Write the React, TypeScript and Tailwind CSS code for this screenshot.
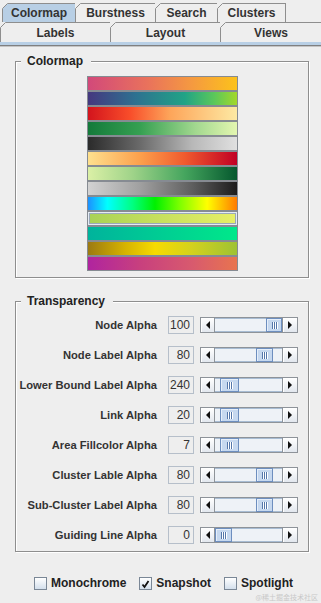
import React from "react";

const FONT = "font-['Liberation_Sans',Arial,sans-serif]";

function Tab({ label, w, selected, last }: { label: string; w: string; selected?: boolean; last?: boolean }) {
  return (
    <div
      className={`relative ${w} h-full flex items-center justify-center border-t border-l border-[#8e8e8e] ${
        last ? "border-r" : ""
      } ${selected ? "bg-[#b8cfe5]" : "bg-[#eeeeee]"} text-[12px] font-bold leading-none text-[#333333]`}
    >
      <svg className="absolute -left-px -top-px" width="6" height="6" viewBox="0 0 6 6">
        <polygon points="0,0 6,0 0,6" fill="#eeeeee" />
        <line x1="0.5" y1="5.5" x2="5.5" y2="0.5" stroke="#8e8e8e" strokeWidth="1" />
      </svg>
      {label}
    </div>
  );
}

function Group({ title, className, children }: { title: string; className: string; children: React.ReactNode }) {
  return (
    <fieldset
      className={`ml-[15px] mr-[12px] border border-[#8e8e8e] shadow-[inset_1px_1px_0_#ffffff,1px_1px_0_#ffffff] ${className}`}
    >
      <legend className="ml-[5px] pl-[6px] pr-[8px] bg-[#eeeeee] text-[12px] font-bold leading-[14px] text-[#222222]">
        {title}
      </legend>
      {children}
    </fieldset>
  );
}

const bars = [
  "bg-[linear-gradient(to_right,#d2497a,#e9725c_40%,#f59a40_70%,#fcc21b)]",
  "bg-[linear-gradient(to_right,#45387f,#2e7190_32%,#21a386_65%,#5cc85a_85%,#a3d82a)]",
  "bg-[linear-gradient(to_right,#d3141d,#f84d2a_28%,#fda55a_55%,#fde9a3)]",
  "bg-[linear-gradient(to_right,#147a3a,#36a052_35%,#a2d88f_72%,#e3f6b0)]",
  "bg-[linear-gradient(to_right,#2b2b2b,#6a6a6a_35%,#b8b8b8_70%,#e0e0e0)]",
  "bg-[linear-gradient(to_right,#fee08e,#fca04c_35%,#f05a2e_65%,#c10024)]",
  "bg-[linear-gradient(to_right,#dbf0a6,#9fd389_30%,#45a55e_65%,#05582e)]",
  "bg-[linear-gradient(to_right,#d2d2d2,#a0a0a0_35%,#5e5e5e_70%,#1c1c1c)]",
  "bg-[linear-gradient(to_right,#1d90ff,#00ffff_13%,#00ff80_30%,#00f000_45%,#80ff00_62%,#ffff00_80%,#ff7a00)]",
  "",
  "bg-[linear-gradient(to_right,#00b39c,#00e88a)]",
  "bg-[linear-gradient(to_right,#9c7a12,#d6b300_25%,#f6da00_45%,#d3d11e_70%,#9ec233)]",
  "bg-[linear-gradient(to_right,#b0249f,#c8407e_35%,#d85a6e_70%,#e8744f)]",
];

function ColorBars() {
  return (
    <div className="flex flex-col items-center pt-[8px] pb-[6px]">
      {bars.map((b, i) =>
        i === 9 ? (
          <div key={i} className="w-[151px] h-[15px] border border-[#868b92] bg-[#e4ebf4] p-px">
            <div className="h-full border border-[#9aa8b8] bg-[linear-gradient(to_right,#a9d256,#e6ef66)]" />
          </div>
        ) : (
          <div key={i} className={`w-[151px] h-[15px] border border-[#868b92] ${b}`} />
        )
      )}
    </div>
  );
}

function Arrow({ dir }: { dir: "left" | "right" }) {
  return (
    <div
      className={`${dir === "left" ? "w-[14px] border-r" : "w-[15px] border-l"} border-[#8e9399] flex items-center justify-center bg-[linear-gradient(#ffffff,#e2e7ee)] shadow-[inset_1px_1px_0_#ffffff]`}
    >
      <svg width="4" height="8" viewBox="0 0 4 8">
        {dir === "left" ? <polygon points="4,0 0,4 4,8" fill="#111111" /> : <polygon points="0,0 4,4 0,8" fill="#111111" />}
      </svg>
    </div>
  );
}

function ScrollBar({ pos, w }: { pos: number; w: number }) {
  return (
    <div className="flex h-[16px] w-[98px] border border-[#8e9399]">
      <Arrow dir="left" />
      <div className="flex-1 flex bg-[#eef2f7] shadow-[inset_0_1px_0_#a8bcd3,inset_0_-1px_0_#a8bcd3]">
        <div className="shrink-0" style={{ width: pos }} />
        <div
          className="shrink-0 flex items-center justify-center gap-[1px] border border-[#6d8ebf] bg-[#c6d8ef] shadow-[inset_1px_1px_0_#e6effa]"
          style={{ width: w }}
        >
          <div className="w-px h-[7px] bg-[#5577aa] shadow-[1px_0_0_#ffffff]" />
          <div className="w-px h-[7px] bg-[#5577aa] shadow-[1px_0_0_#ffffff]" />
          <div className="w-px h-[7px] bg-[#5577aa] shadow-[1px_0_0_#ffffff]" />
        </div>
      </div>
      <Arrow dir="right" />
    </div>
  );
}

const rows = [
  { label: "Node Alpha", value: "100", pos: 51, w: 16 },
  { label: "Node Label Alpha", value: "80", pos: 41, w: 17 },
  { label: "Lower Bound Label Alpha", value: "240", pos: 5, w: 19 },
  { label: "Link Alpha", value: "20", pos: 5, w: 19 },
  { label: "Area Fillcolor Alpha", value: "7", pos: 5, w: 19 },
  { label: "Cluster Lable Alpha", value: "80", pos: 41, w: 17 },
  { label: "Sub-Cluster Label Alpha", value: "80", pos: 41, w: 17 },
  { label: "Guiding Line Alpha", value: "0", pos: 0, w: 17 },
];

function Check({ label, checked }: { label: string; checked?: boolean }) {
  return (
    <div className="flex items-center gap-[4px]">
      <div className="w-[13px] h-[13px] border border-[#7a8796] bg-[linear-gradient(#ffffff,#d3dfec)]">
        {checked && (
          <svg width="11" height="11" viewBox="0 0 11 11">
            <path d="M2.5 6.5 L4.5 9 L8.5 3" stroke="#111111" strokeWidth="1.8" fill="none" />
          </svg>
        )}
      </div>
      <span className="text-[12px] font-bold leading-[14px] text-[#222222]">{label}</span>
    </div>
  );
}

export default function App() {
  return (
    <div className={`w-[321px] h-[603px] bg-[#eeeeee] overflow-hidden flex flex-col ${FONT} text-[#333333]`}>
      <div className="pt-[3px]">
        <div className="flex h-[19px] pl-[2px]">
          <Tab label="Colormap" w="w-[73px]" selected />
          <Tab label="Burstness" w="w-[80px]" />
          <Tab label="Search" w="w-[62px]" />
          <Tab label="Clusters" w="w-[69px]" last />
        </div>
        <div className="flex h-[20px]">
          <Tab label="Labels" w="w-[110px]" />
          <Tab label="Layout" w="w-[110px]" />
          <Tab label="Views" w="flex-1" />
        </div>
      </div>
      <div className="h-[3px] bg-[#b8cfe5]" />
      <div className="h-px bg-[#7f7f7f]" />
      <div className="h-px bg-[#c4c4c4]" />

      <Group title="Colormap" className="mt-[7px]">
        <ColorBars />
      </Group>

      <Group title="Transparency" className="mt-[16px]">
        <div className="flex flex-col gap-[10px] pt-[7px] pb-[6px]">
          {rows.map((r) => (
            <div key={r.label} className="flex items-center h-[20px]">
              <div className="w-[141px] text-right text-[11.2px] font-bold leading-[14px] text-[#333333] whitespace-nowrap">
                {r.label}
              </div>
              <div className="ml-[11px] w-[26px] h-[18px] border border-[#b6bfca] pr-[3px] text-right text-[12px] leading-[16px] text-[#333333]">
                {r.value}
              </div>
              <div className="ml-[6px]">
                <ScrollBar pos={r.pos} w={r.w} />
              </div>
            </div>
          ))}
        </div>
      </Group>

      <div className="mt-[23px] h-[16px] flex items-center pl-[34px] gap-[13px]">
        <Check label="Monochrome" />
        <Check label="Snapshot" checked />
        <Check label="Spotlight" />
      </div>
      <div className="mt-[2px] self-end pr-[3px] text-[7px] leading-[9px] text-[#c8c8c8] font-['Noto_Sans_CJK_SC',sans-serif]">
        @稀土掘金技术社区
      </div>
    </div>
  );
}
